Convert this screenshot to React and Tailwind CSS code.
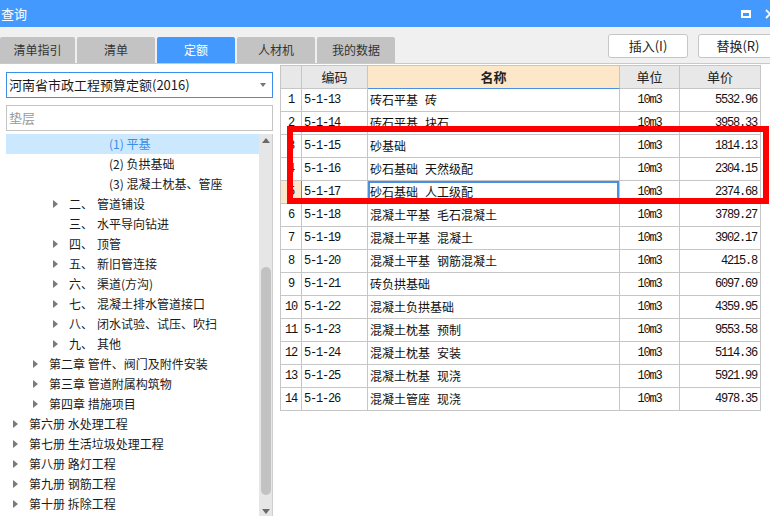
import React from "react";

const FONT = { fontFamily: '"Noto Sans CJK SC", "Microsoft YaHei", sans-serif' };
const MONO = { fontFamily: '"Liberation Mono", "DejaVu Sans Mono", monospace' };

const tree = [
  { kind: "leaf", label: "(1) 平基", selected: true },
  { kind: "leaf", label: "(2) 负拱基础" },
  { kind: "leaf", label: "(3) 混凝土枕基、管座" },
  { kind: "l3", num: "二、", label: "管道铺设", arrow: true },
  { kind: "l3", num: "三、", label: "水平导向钻进", arrow: false },
  { kind: "l3", num: "四、", label: "顶管", arrow: true },
  { kind: "l3", num: "五、", label: "新旧管连接", arrow: true },
  { kind: "l3", num: "六、", label: "渠道(方沟)", arrow: true },
  { kind: "l3", num: "七、", label: "混凝土排水管道接口", arrow: true },
  { kind: "l3", num: "八、", label: "闭水试验、试压、吹扫", arrow: true },
  { kind: "l3", num: "九、", label: "其他", arrow: true },
  { kind: "l2", label: "第二章 管件、阀门及附件安装" },
  { kind: "l2", label: "第三章 管道附属构筑物" },
  { kind: "l2", label: "第四章 措施项目" },
  { kind: "l1", label: "第六册 水处理工程" },
  { kind: "l1", label: "第七册 生活垃圾处理工程" },
  { kind: "l1", label: "第八册 路灯工程" },
  { kind: "l1", label: "第九册 钢筋工程" },
  { kind: "l1", label: "第十册 拆除工程" },
];

const rows = [
  ["5-1-13", "砖石平基", "砖", "5532.96"],
  ["5-1-14", "砖石平基", "块石", "3958.33"],
  ["5-1-15", "砂基础", "", "1814.13"],
  ["5-1-16", "砂石基础", "天然级配", "2304.15"],
  ["5-1-17", "砂石基础", "人工级配", "2374.68"],
  ["5-1-18", "混凝土平基", "毛石混凝土", "3789.27"],
  ["5-1-19", "混凝土平基", "混凝土", "3902.17"],
  ["5-1-20", "混凝土平基", "钢筋混凝土", "4215.8"],
  ["5-1-21", "砖负拱基础", "", "6097.69"],
  ["5-1-22", "混凝土负拱基础", "", "4359.95"],
  ["5-1-23", "混凝土枕基", "预制", "9553.58"],
  ["5-1-24", "混凝土枕基", "安装", "5114.36"],
  ["5-1-25", "混凝土枕基", "现浇", "5921.99"],
  ["5-1-26", "混凝土管座", "现浇", "4978.35"],
];

function Arrow({ show = true }) {
  return (
    <span className="w-[16px] h-[20px] flex items-center shrink-0">
      {show && (
        <span className="block w-0 h-0 border-y-[4px] border-y-transparent border-l-[5px] border-l-[#7a7a7a]" />
      )}
    </span>
  );
}

function TreeRow({ item }) {
  if (item.kind === "leaf") {
    return (
      <div
        className={
          "h-[20px] flex items-center pl-[103px] text-[12px] " +
          (item.selected ? "bg-[#cce8ff] text-[#3a8ee6]" : "text-[#1a1a1a]")
        }
      >
        {item.label}
      </div>
    );
  }
  if (item.kind === "l3") {
    return (
      <div className="h-[20px] flex items-center pl-[47px] text-[12px] text-[#1a1a1a]">
        <Arrow show={item.arrow} />
        <span className="w-[28px] shrink-0">{item.num}</span>
        <span>{item.label}</span>
      </div>
    );
  }
  const pl = item.kind === "l2" ? "pl-[27px]" : "pl-[7px]";
  return (
    <div className={"h-[20px] flex items-center text-[12px] text-[#1a1a1a] " + pl}>
      <Arrow />
      <span className="whitespace-nowrap">{item.label}</span>
    </div>
  );
}

const cell = "border-r border-b border-[#c6c6c6] h-[23px] flex items-center shrink-0";

export default function App() {
  return (
    <div className="w-[770px] h-[516px] overflow-hidden relative bg-white" style={FONT}>
      {/* title bar */}
      <div className="h-[27px] bg-[#4499ff] flex items-center justify-between">
        <span className="text-white text-[13px] pl-[1px]">查询</span>
        <div className="flex items-center gap-[13px] mr-[-6px]">
          <span className="block w-[10px] h-[8px] border-2 border-t-[3px] border-white" />
          <svg width="12" height="12" viewBox="0 0 12 12">
            <path d="M2 2 L10 10 M10 2 L2 10" stroke="white" strokeWidth="1.8" />
          </svg>
        </div>
      </div>

      {/* toolbar / tabs */}
      <div className="h-[37px] bg-[#f0f0f0] border-b border-[#c9c9c9] flex items-end overflow-hidden">
        <div className="flex items-end gap-[2px]">
          {["清单指引", "清单", "定额", "人材机", "我的数据"].map((t, i) => (
            <div
              key={t}
              className={
                "h-[26px] flex items-center justify-center text-[12px] rounded-t-[2px] " +
                (i === 0 ? "w-[75px] " : "w-[78px] ") +
                (i === 2 ? "bg-[#4499ff] text-white" : "bg-[#c3c3c3] text-[#333]")
              }
            >
              {t}
            </div>
          ))}
        </div>
        <div className="ml-auto flex gap-[10px] mr-[-8px] self-start mt-[7px]">
          <div className="w-[80px] h-[24px] bg-white border border-[#c6c6c6] rounded-[3px] flex items-center justify-center text-[13px] text-[#222]">
            插入(I)
          </div>
          <div className="w-[80px] h-[24px] bg-white border border-[#c6c6c6] rounded-[3px] flex items-center justify-center text-[13px] text-[#222]">
            替换(R)
          </div>
        </div>
      </div>

      {/* body */}
      <div className="flex h-[452px]">
        {/* left panel */}
        <div className="w-[280px] shrink-0 pl-[6px] pr-[7px] pt-[8px] flex flex-col">
          <div className="h-[26px] border border-[#3d8ee8] flex items-center justify-between pl-[2px] pr-[6px]">
            <span className="text-[13px] text-[#1a1a1a]">河南省市政工程预算定额(2016)</span>
            <span className="block w-0 h-0 border-x-[3px] border-x-transparent border-t-[4px] border-t-[#777]" />
          </div>
          <div className="h-[26px] mt-[7px] border border-[#c4c4c4] flex items-center pl-[2px] text-[13px] text-[#9a9a9a]">
            垫层
          </div>
          <div className="flex mt-[3px] flex-1 overflow-hidden">
            <div className="flex-1 flex flex-col">
              {tree.map((it, i) => (
                <TreeRow key={i} item={it} />
              ))}
            </div>
            <div className="w-[14px] shrink-0 bg-[#e6e6e6] border-r border-[#cfcfcf] flex flex-col items-center">
              <span className="block mt-[4px] w-0 h-0 border-x-[4px] border-x-transparent border-b-[5px] border-b-[#6a6a6a]" />
              <span className="block mt-[124px] w-[10px] h-[228px] rounded-full bg-[#c2c2c2]" />
              <span className="block mt-[14px] w-0 h-0 border-x-[4px] border-x-transparent border-t-[5px] border-t-[#6a6a6a]" />
            </div>
          </div>
        </div>

        {/* table */}
        <div className="pt-[1px]">
          <div className="border-l border-[#c6c6c6] w-[481px]">
            <div className="flex border-t border-[#c6c6c6] text-[13px] text-[#222]">
              <div className={cell + " w-[21px] bg-[#e8e8e8]"} />
              <div className={cell + " w-[66px] bg-[#e8e8e8] justify-center"}>编码</div>
              <div className={cell + " w-[252px] bg-[#fde7c9] justify-center font-bold border-b-[#4a90e2]"}>名称</div>
              <div className={cell + " w-[60px] bg-[#e8e8e8] justify-center"}>单位</div>
              <div className={cell + " w-[81px] bg-[#e8e8e8] justify-center"}>单价</div>
            </div>
            {rows.map((r, i) => {
              const sel = i === 4;
              return (
                <div key={i} className="flex text-[12px] text-[#111]">
                  <div
                    className={
                      cell +
                      " w-[21px] justify-center " +
                      (sel ? "bg-[#fde7c9] border-r-[#4a90e2]" : "")
                    }
                    style={MONO}
                  >
                    <span className="tracking-[-1.2px]">{i + 1}</span>
                  </div>
                  <div className={cell + " w-[66px] pl-[2px]"} style={MONO}>
                    <span className="tracking-[-1.2px]">{r[0]}</span>
                  </div>
                  <div
                    className={
                      cell +
                      " w-[252px] pl-[2px] gap-[7px] " +
                      (sel ? "shadow-[inset_0_0_0_2px_#4a90e2]" : "")
                    }
                  >
                    <span>{r[1]}</span>
                    {r[2] && <span>{r[2]}</span>}
                  </div>
                  <div className={cell + " w-[60px] justify-center"} style={MONO}>
                    <span className="tracking-[-1.2px]">10m3</span>
                  </div>
                  <div className={cell + " w-[81px] justify-end pr-[3px]"} style={MONO}>
                    <span className="tracking-[-1.2px]">{r[3]}</span>
                  </div>
                </div>
              );
            })}
          </div>
        </div>
      </div>

      {/* red annotation box */}
      <div className="absolute left-[287px] top-[126px] w-[482px] h-[78px] border-[6px] border-[#ff0000] pointer-events-none" />
    </div>
  );
}
